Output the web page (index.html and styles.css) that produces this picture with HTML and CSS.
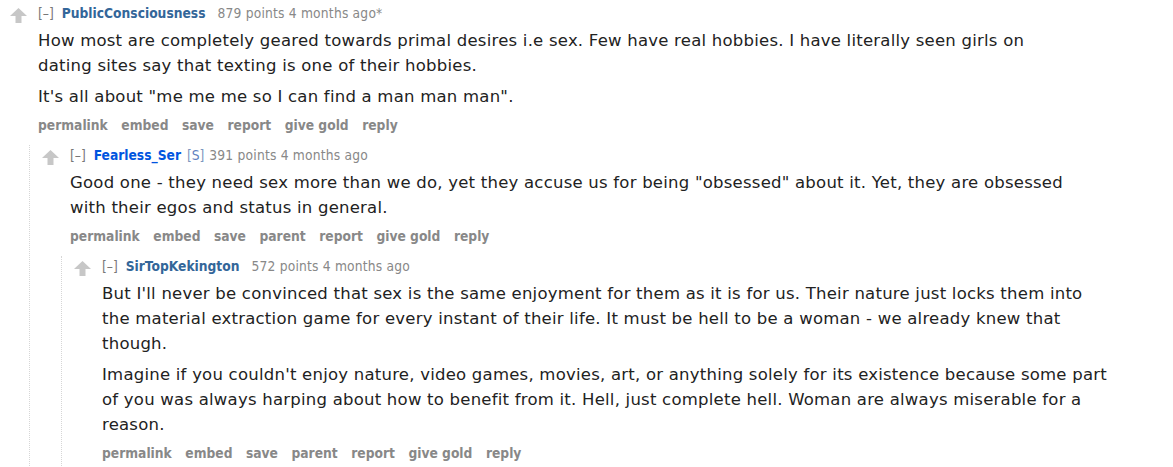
FILE: index.html
```html
<!DOCTYPE html>
<html>
<head>
<meta charset="utf-8">
<link rel="stylesheet" href="styles.css">
</head>
<body>
<div class="thread">
  <div class="comment">
    <div class="row">
      <div class="midcol"><svg class="arrow" viewBox="0 0 17 15"><path d="M8.5 0 L17 8 H11.5 V15 H5.5 V8 H0 Z"/></svg></div>
      <div class="entry">
        <div class="tagline"><span class="expand">[–]</span> <a class="author">PublicConsciousness</a> <span class="meta">879 points 4 months ago*</span></div>
        <div class="md">
          <p>How most are completely geared towards primal desires i.e sex. Few have real hobbies. I have literally seen girls on<br>dating sites say that texting is one of their hobbies.</p>
          <p>It's all about "me me me so I can find a man man man".</p>
        </div>
        <ul class="buttons">
          <li>permalink</li><li>embed</li><li>save</li><li>report</li><li>give gold</li><li>reply</li>
        </ul>
      </div>
    </div>
    <div class="child">
      <div class="comment">
        <div class="row">
          <div class="midcol"><svg class="arrow" viewBox="0 0 17 15"><path d="M8.5 0 L17 8 H11.5 V15 H5.5 V8 H0 Z"/></svg></div>
          <div class="entry">
            <div class="tagline"><span class="expand">[–]</span> <a class="author submitter">Fearless_Ser</a> <span class="attrs">[<span class="s">S</span>]</span> <span class="meta">391 points 4 months ago</span></div>
            <div class="md">
              <p>Good one - they need sex more than we do, yet they accuse us for being "obsessed" about it. Yet, they are obsessed<br>with their egos and status in general.</p>
            </div>
            <ul class="buttons">
              <li>permalink</li><li>embed</li><li>save</li><li>parent</li><li>report</li><li>give gold</li><li>reply</li>
            </ul>
          </div>
        </div>
        <div class="child">
          <div class="comment">
            <div class="row">
              <div class="midcol"><svg class="arrow" viewBox="0 0 17 15"><path d="M8.5 0 L17 8 H11.5 V15 H5.5 V8 H0 Z"/></svg></div>
              <div class="entry">
                <div class="tagline"><span class="expand">[–]</span> <a class="author">SirTopKekington</a> <span class="meta">572 points 4 months ago</span></div>
                <div class="md">
                  <p>But I'll never be convinced that sex is the same enjoyment for them as it is for us. Their nature just locks them into the material extraction game for every instant of their life. It must be hell to be a woman - we already knew that though.</p>
                  <p>Imagine if you couldn't enjoy nature, video games, movies, art, or anything solely for its existence because some part of you was always harping about how to benefit from it. Hell, just complete hell. Woman are always miserable for a reason.</p>
                </div>
                <ul class="buttons">
                  <li>permalink</li><li>embed</li><li>save</li><li>parent</li><li>report</li><li>give gold</li><li>reply</li>
                </ul>
              </div>
            </div>
          </div>
        </div>
      </div>
    </div>
  </div>
</div>
</body>
</html>
```
FILE: styles.css
```css
html, body {
  margin: 0;
  padding: 0;
  background: #fff;
  height: 100%;
  overflow: hidden;
}
body {
  padding-top: 3px;
  font-family: "DejaVu Sans", Verdana, sans-serif;
  color: #222;
}
.thread {
  height: 100%;
  padding-right: 65px;
}
.comment {
  padding-top: 2px;
  display: flex;
  flex-direction: column;
  flex: 1;
}
.thread > .comment {
  height: 100%;
}
.row {
  display: flex;
  align-items: flex-start;
}
.midcol {
  margin-left: 10px;
  width: 17px;
  margin-right: 11px;
  padding-top: 3px;
  flex: none;
}
.arrow {
  display: block;
  width: 17px;
  height: 15px;
  fill: #c7c7c7;
}
.entry {
  flex: 1;
  min-width: 0;
}
.tagline {
  font-family: "DejaVu Sans Condensed", "DejaVu Sans", sans-serif;
  font-stretch: condensed;
  font-size: 13.7px;
  line-height: 16px;
  color: #888;
  white-space: nowrap;
}
.expand {
  color: #777;
}
.author {
  color: #369;
  font-weight: bold;
  margin: 0 8px 0 4px;
}
.author.submitter {
  color: #0055df;
  margin-right: 2px;
}
.meta {
  letter-spacing: 0.2px;
}
.attrs {
  color: #7c96c0;
  margin-right: 1px;
}
.attrs .s {
  color: #5f80c0;
}
.md {
  margin-top: 7px;
  font-size: 16.5px;
  letter-spacing: 0.23px;
  line-height: 25px;
}
.md p {
  margin: 0;
}
.md p + p {
  margin-top: 6px;
}
.buttons {
  list-style: none;
  margin: 8px 0 0;
  padding: 0;
  display: flex;
  gap: 13.5px;
  font-family: "DejaVu Sans Condensed", "DejaVu Sans", sans-serif;
  font-stretch: condensed;
  font-size: 13.7px;
  line-height: 16px;
  font-weight: bold;
  color: #888;
}
.child {
  margin-top: 12px;
  margin-left: 29px;
  padding-left: 2px;
  border-left: 1px dotted #d6d6d6;
  flex: 1;
  display: flex;
  flex-direction: column;
}
```
